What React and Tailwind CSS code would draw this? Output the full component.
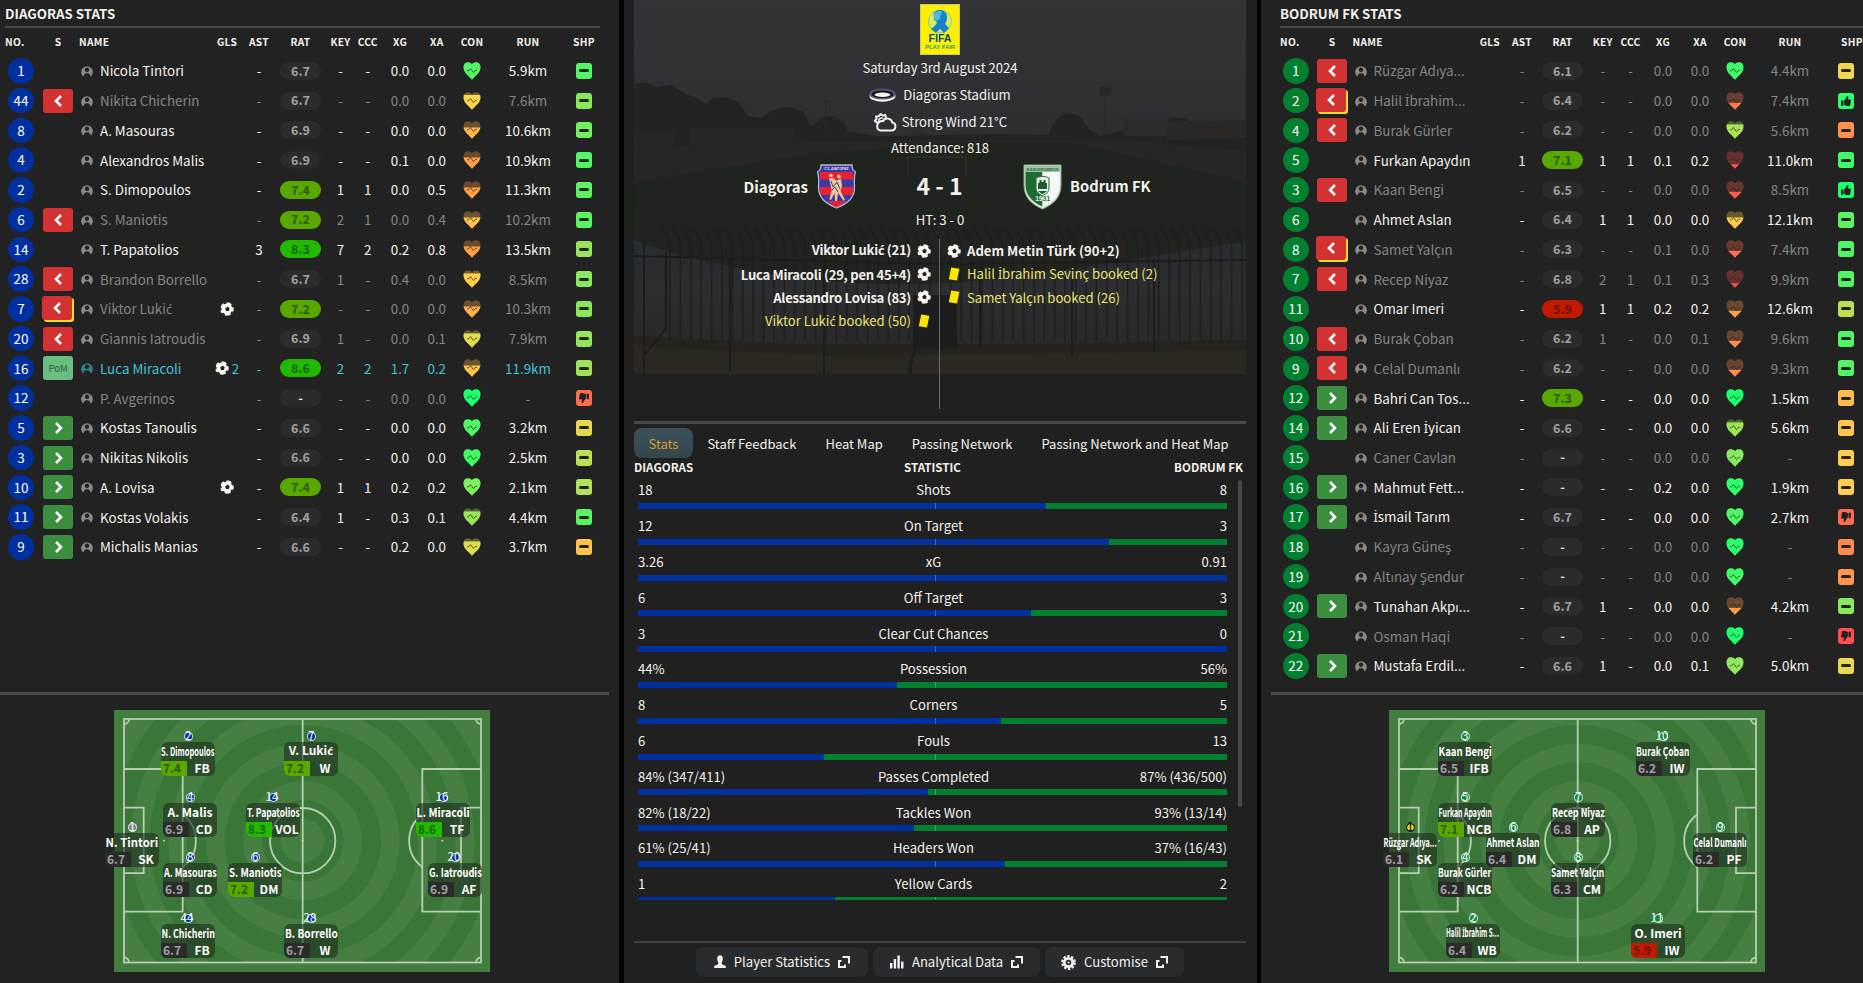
import { useLayoutEffect, useRef } from 'react';
import { FaThumbsUp, FaThumbsDown } from 'react-icons/fa';

const BLUE = '#0030a0';
const GREEN = '#03802f';

// no, sub status, name, goals, ast, rating, key, ccc, xg, xa, heart colour, heart level, run, shape colour, shape icon, tone
const HOME_PLAYERS = [
  [1, '', 'Nicola Tintori', 0, '-', '6.7', '-', '-', '0.0', '0.0', '#52f562', 1, '5.9km', '#52f566', '-', 'lit'],
  [44, 'off', 'Nikita Chicherin', 0, '-', '6.7', '-', '-', '0.0', '0.0', '#f8d84a', 0.83, '7.6km', '#8be85c', '-', 'dim'],
  [8, '', 'A. Masouras', 0, '-', '6.9', '-', '-', '0.0', '0.0', '#ffb84a', 0.62, '10.6km', '#72ee60', '-', 'lit'],
  [4, '', 'Alexandros Malis', 0, '-', '6.9', '-', '-', '0.1', '0.0', '#ff9f45', 0.62, '10.9km', '#52f566', '-', 'lit'],
  [2, '', 'S. Dimopoulos', 0, '-', '7.4', '1', '1', '0.0', '0.5', '#ff9f45', 0.62, '11.3km', '#5cf363', '-', 'lit'],
  [6, 'off', 'S. Maniotis', 0, '-', '7.2', '2', '1', '0.0', '0.4', '#ffc24a', 0.62, '10.2km', '#5cf363', '-', 'dim'],
  [14, '', 'T. Papatolios', 0, '3', '8.3', '7', '2', '0.2', '0.8', '#ff9f45', 0.62, '13.5km', '#9be35a', '-', 'lit'],
  [28, 'off', 'Brandon Borrello', 0, '-', '6.7', '1', '-', '0.4', '0.0', '#ffcf4a', 0.8, '8.5km', '#8be85c', '-', 'dim'],
  [7, 'off-booked', 'Viktor Lukić', 1, '-', '7.2', '-', '-', '0.0', '0.0', '#ffb24a', 0.62, '10.3km', '#8be85c', '-', 'dim'],
  [20, 'off', 'Giannis Iatroudis', 0, '-', '6.9', '1', '-', '0.0', '0.1', '#e2dc4f', 0.8, '7.9km', '#94e65b', '-', 'dim'],
  [16, 'pom', 'Luca Miracoli', 2, '-', '8.6', '2', '2', '1.7', '0.2', '#ffc24a', 0.62, '11.9km', '#a0e15a', '-', 'pom'],
  [12, '', 'P. Avgerinos', 0, '-', '-', '-', '-', '0.0', '0.0', '#1dff6b', 1, '-', '#ff6b4f', 'down', 'dim'],
  [5, 'on', 'Kostas Tanoulis', 0, '-', '6.6', '-', '-', '0.0', '0.0', '#4ff562', 1, '3.2km', '#e5d852', '-', 'lit'],
  [3, 'on', 'Nikitas Nikolis', 0, '-', '6.6', '-', '-', '0.0', '0.0', '#40fa64', 1, '2.5km', '#bddf57', '-', 'lit'],
  [10, 'on', 'A. Lovisa', 1, '-', '7.4', '1', '1', '0.2', '0.2', '#7def5c', 1, '2.1km', '#b0e158', '-', 'lit'],
  [11, 'on', 'Kostas Volakis', 0, '-', '6.4', '1', '-', '0.3', '0.1', '#9be656', 0.8, '4.4km', '#5cf363', '-', 'lit'],
  [9, 'on', 'Michalis Manias', 0, '-', '6.6', '-', '-', '0.2', '0.0', '#dedc50', 0.8, '3.7km', '#ffc24f', '-', 'lit'],
];

const AWAY_PLAYERS = [
  [1, 'off', 'Rüzgar Adıya...', 0, '-', '6.1', '-', '-', '0.0', '0.0', '#40fa64', 1, '4.4km', '#f3d54f', '-', 'dim'],
  [2, 'off-booked', 'Halil İbrahim...', 0, '-', '6.4', '-', '-', '0.0', '0.0', '#ff7a4a', 0.36, '7.4km', '#2cff6c', 'up', 'dim'],
  [4, 'off', 'Burak Gürler', 0, '-', '6.2', '-', '-', '0.0', '0.0', '#a5e556', 0.8, '5.6km', '#ff914d', '-', 'dim'],
  [5, '', 'Furkan Apaydın', 0, '1', '7.1', '1', '1', '0.1', '0.2', '#ff4f4a', 0.22, '11.0km', '#40fa69', '-', 'lit'],
  [3, 'off', 'Kaan Bengi', 0, '-', '6.5', '-', '-', '0.0', '0.0', '#ff5e4a', 0.36, '8.5km', '#1dff6b', 'up', 'dim'],
  [6, '', 'Ahmet Aslan', 0, '-', '6.4', '1', '1', '0.0', '0.0', '#ffcc4a', 0.62, '12.1km', '#5cf363', '-', 'lit'],
  [8, 'off-booked', 'Samet Yalçın', 0, '-', '6.3', '-', '-', '0.1', '0.0', '#ff6f4a', 0.36, '7.4km', '#52f566', '-', 'dim'],
  [7, 'off', 'Recep Niyaz', 0, '-', '6.8', '2', '1', '0.1', '0.3', '#ff4f4a', 0.22, '9.9km', '#52f566', '-', 'dim'],
  [11, '', 'Omar Imeri', 0, '-', '5.9', '1', '1', '0.2', '0.2', '#ff9f45', 0.36, '12.6km', '#bddf57', '-', 'lit'],
  [10, 'off', 'Burak Çoban', 0, '-', '6.2', '1', '-', '0.0', '0.1', '#ff8c4a', 0.36, '9.6km', '#52f566', '-', 'dim'],
  [9, 'off', 'Celal Dumanlı', 0, '-', '6.2', '-', '-', '0.0', '0.0', '#ff8c4a', 0.36, '9.3km', '#52f566', '-', 'dim'],
  [12, 'on', 'Bahri Can Tos...', 0, '-', '7.3', '-', '-', '0.0', '0.0', '#1dff6b', 1, '1.5km', '#ffbb4f', '-', 'lit'],
  [14, 'on', 'Ali Eren İyican', 0, '-', '6.6', '-', '-', '0.0', '0.0', '#9be656', 0.8, '5.6km', '#ffc64f', '-', 'lit'],
  [15, '', 'Caner Cavlan', 0, '-', '-', '-', '-', '0.0', '0.0', '#86eb5c', 1, '-', '#ffce4f', '-', 'dim'],
  [16, 'on', 'Mahmut Fett...', 0, '-', '-', '-', '-', '0.2', '0.0', '#2cff6c', 1, '1.9km', '#ffce4f', '-', 'lit'],
  [17, 'on', 'İsmail Tarım', 0, '-', '6.7', '-', '-', '0.0', '0.0', '#4ff562', 1, '2.7km', '#ff6b4f', 'down', 'lit'],
  [18, '', 'Kayra Güneş', 0, '-', '-', '-', '-', '0.0', '0.0', '#2cff6c', 1, '-', '#ff8a4d', '-', 'dim'],
  [19, '', 'Altınay Şendur', 0, '-', '-', '-', '-', '0.0', '0.0', '#40fa64', 1, '-', '#ff964d', '-', 'dim'],
  [20, 'on', 'Tunahan Akpı...', 0, '-', '6.7', '1', '-', '0.0', '0.0', '#ff9f45', 0.36, '4.2km', '#86eb5c', '-', 'lit'],
  [21, '', 'Osman Haqi', 0, '-', '-', '-', '-', '0.0', '0.0', '#1dff6b', 1, '-', '#ff4f4f', 'down', 'dim'],
  [22, 'on', 'Mustafa Erdil...', 0, '-', '6.6', '1', '-', '0.0', '0.1', '#8fe95a', 1, '5.0km', '#ead852', '-', 'lit'],
];

// name, rating, role, shirt, x, y
const HOME_LINEUP = [
  ['N. Tintori', '6.7', 'SK', '1', -9, 123],
  ['S. Dimopoulos', '7.4', 'FB', '2', 47, 32],
  ['A. Malis', '6.9', 'CD', '4', 49, 93],
  ['A. Masouras', '6.9', 'CD', '8', 49, 153],
  ['N. Chicherin', '6.7', 'FB', '44', 47, 214],
  ['V. Lukić', '7.2', 'W', '7', 170, 32],
  ['T. Papatolios', '8.3', 'VOL', '14', 132, 93],
  ['S. Maniotis', '7.2', 'DM', '6', 114, 153],
  ['B. Borrello', '6.7', 'W', '28', 170, 214],
  ['L. Miracoli', '8.6', 'TF', '16', 302, 93],
  ['G. Iatroudis', '6.9', 'AF', '20', 314, 153],
];

const AWAY_LINEUP = [
  ['Rüzgar Adıya...', '6.1', 'SK', '1', -6, 123],
  ['Kaan Bengi', '6.5', 'IFB', '3', 49, 32],
  ['Furkan Apaydın', '7.1', 'NCB', '5', 49, 93],
  ['Burak Gürler', '6.2', 'NCB', '4', 49, 153],
  ['Halil İbrahim S...', '6.4', 'WB', '2', 57, 214],
  ['Ahmet Aslan', '6.4', 'DM', '6', 97, 123],
  ['Recep Niyaz', '6.8', 'AP', '7', 162, 93],
  ['Samet Yalçın', '6.3', 'CM', '8', 162, 153],
  ['Burak Çoban', '6.2', 'IW', '10', 247, 32],
  ['Celal Dumanlı', '6.2', 'PF', '9', 304, 123],
  ['O. Imeri', '5.9', 'IW', '11', 242, 214],
];

const MATCH_STATS = [
  ['18', 'Shots', '8', 69.3],
  ['12', 'On Target', '3', 80],
  ['3.26', 'xG', '0.91', 100],
  ['6', 'Off Target', '3', 66.7],
  ['3', 'Clear Cut Chances', '0', 100],
  ['44%', 'Possession', '56%', 44],
  ['8', 'Corners', '5', 61.6],
  ['6', 'Fouls', '13', 31.6],
  ['84% (347/411)', 'Passes Completed', '87% (436/500)', 49.3],
  ['82% (18/22)', 'Tackles Won', '93% (13/14)', 46.9],
  ['61% (25/41)', 'Headers Won', '37% (16/43)', 62.3],
  ['1', 'Yellow Cards', '2', 33.4],
];

const TABS = ['Stats', 'Staff Feedback', 'Heat Map', 'Passing Network', 'Passing Network and Heat Map'];

const HOME_COLS = 'grid-cols-[42px_32px_135px_36px_28px_55px_25px_29.5px_35px_38.5px_32px_80px_32px]';
const AWAY_COLS = 'grid-cols-[41.5px_31px_126px_32.5px_32px_49px_31.5px_24px_41px_33px_37px_73px_39px]';

const TONES = {
  lit: 'text-[#f4f1ec]',
  dim: 'text-[#858585]',
  pom: 'text-[#42c0d6]',
};

function ratingClass(rating) {
  const value = parseFloat(rating);
  if (Number.isNaN(value)) return 'bg-[#2b2b2b] text-[#e5e5e5]';
  if (value >= 8) return 'bg-[#23b900] text-[#15650a]';
  if (value >= 7) return 'bg-[#58a800] text-[#2f5a07]';
  if (value < 6) return 'bg-[#c21a00] text-[#6d1206]';
  return 'bg-[#2b2b2b] text-[#a0a0a0]';
}

export default function App() {
  return (
    <div className="flex h-[983px] w-[1863px] overflow-hidden bg-black font-['Noto_Sans_CJK_SC','Noto_Sans',sans-serif] text-[13.4px] leading-none text-[#f4f1ec]">
      <section className="flex w-[619px] flex-none flex-col bg-[#222222]">
        <TeamTable title="DIAGORAS STATS" cols={HOME_COLS} players={HOME_PLAYERS} colour={BLUE} home />
        <div className="h-[3px] w-[609px] flex-none bg-[#484848]" />
        <div className="pt-[15px] pl-[114px]">
          <Pitch lineup={HOME_LINEUP} colour={BLUE} keeper="#8a8090" />
        </div>
      </section>

      <MatchPanel />

      <section className="ml-1 flex w-[602px] flex-none flex-col overflow-hidden bg-[#222222]">
        <div className="pl-[14px]">
          <TeamTable title="BODRUM FK STATS" cols={AWAY_COLS} players={AWAY_PLAYERS} colour={GREEN} />
        </div>
        <div className="ml-[10px] h-[3px] flex-none bg-[#484848]" />
        <div className="pt-[15px] pl-[128px]">
          <Pitch lineup={AWAY_LINEUP} colour="#0a8a45" keeper="#e6d800" darkKeeper />
        </div>
      </section>
    </div>
  );
}

function Name({ children }) {
  return children.split(/([ćİ])/).map((part, i) =>
    part === 'ć' || part === 'İ' ? (
      <span key={i} className="font-['Noto_Sans',sans-serif] text-[0.95em]">
        {part}
      </span>
    ) : (
      part
    )
  );
}

function TeamTable({ title, cols, players, colour, home }) {
  return (
    <div className="flex h-[692px] flex-none flex-col">
      <h2 className="flex h-[25.5px] items-center pt-px pl-[5px] text-[13.3px] font-bold">{title}</h2>
      <div className={`ml-[5px] h-[2px] flex-none bg-[#484848] ${home ? 'w-[595px]' : 'w-[600px]'}`} />
      <div className={`grid h-[28.6px] flex-none items-center pt-px text-center text-[10.2px] font-bold tracking-[0.3px] ${cols}`}>
        <span className="pl-[5px] text-left">NO.</span>
        <span>S</span>
        <span className="pl-[5px] text-left">NAME</span>
        <span>GLS</span>
        <span>AST</span>
        <span>RAT</span>
        <span>KEY</span>
        <span>CCC</span>
        <span>XG</span>
        <span>XA</span>
        <span>CON</span>
        <span>RUN</span>
        <span className={home ? '' : 'pl-3'}>SHP</span>
      </div>
      {players.map((player) => (
        <PlayerRow key={player[0]} player={player} cols={cols} colour={colour} />
      ))}
    </div>
  );
}

function PlayerRow({ player, cols, colour }) {
  const [no, sub, name, goals, ast, rating, key, ccc, xg, xa, heart, level, run, shape, shapeIcon, tone] = player;
  return (
    <div className={`grid h-[29.75px] flex-none items-center justify-items-center ${cols} ${TONES[tone]}`}>
      <span
        className="flex h-[25.5px] w-[25.5px] items-center justify-center rounded-full text-[13.5px] text-white"
        style={{ backgroundColor: colour }}
      >
        {no}
      </span>
      <SubBadge status={sub} />
      <span className="flex w-full items-center gap-[7px] pl-[7px] whitespace-nowrap">
        <PersonIcon className={tone === 'pom' ? 'text-[#2f7f8c]' : 'text-[#8b8886]'} />
        <span>
          <Name>{name}</Name>
        </span>
      </span>
      <span className="flex items-center gap-[3px]">
        {goals > 0 && <BallIcon />}
        {goals > 1 && <span>{goals}</span>}
      </span>
      <span>{ast}</span>
      <span className={`flex h-[18px] w-[41px] items-center justify-center rounded-full text-[12.5px] font-bold ${ratingClass(rating)}`}>
        {rating}
      </span>
      <span>{key}</span>
      <span>{ccc}</span>
      <span>{xg}</span>
      <span>{xa}</span>
      <HeartIcon colour={heart} level={level} id={`${colour.slice(1)}-${no}`} />
      <span>{run}</span>
      <span className="flex h-4 w-4 items-center justify-center rounded-[3px] text-[#222222]" style={{ backgroundColor: shape }}>
        {shapeIcon === 'up' && <FaThumbsUp size={10} />}
        {shapeIcon === 'down' && <FaThumbsDown size={10} className="-scale-x-100" />}
        {shapeIcon === '-' && <span className="h-[3px] w-[10px] rounded-full bg-[#222222]" />}
      </span>
    </div>
  );
}

function SubBadge({ status }) {
  if (!status) return <span />;
  if (status === 'pom') {
    return (
      <span className="flex h-6 w-[30px] items-center justify-center rounded-[3px] bg-[#69be80] text-[9.5px] text-[#2c6440]">
        PoM
      </span>
    );
  }
  if (status === 'on') {
    return (
      <span className="flex h-6 w-[30px] items-center justify-center rounded-[3px] bg-[#3b8f3e]">
        <Chevron d="M3 1l5 5-5 5" />
      </span>
    );
  }
  const booked = status === 'off-booked' ? '-translate-x-px -translate-y-px shadow-[2px_2px_0_#f2e01f]' : '';
  return (
    <span className={`flex h-6 w-[30px] items-center justify-center rounded-[3px] bg-[#d43132] ${booked}`}>
      <Chevron d="M8 1L3 6l5 5" />
    </span>
  );
}

function Chevron({ d }) {
  return (
    <svg width="11" height="12" viewBox="0 0 11 12" fill="none" stroke="#fff" strokeWidth="2.6">
      <path d={d} />
    </svg>
  );
}

function PersonIcon({ className }) {
  return (
    <svg width="12" height="12" viewBox="0 0 12 12" className={`flex-none ${className}`}>
      <path d="M1.8 11.2A5.9 5.9 0 1 1 10.2 11.2z" fill="currentColor" />
      <circle cx="6" cy="4.7" r="2.2" fill="#222" />
      <path d="M2.6 12C2.6 9.2 4 8.2 6 8.2s3.4 1 3.4 3.8z" fill="#222" />
    </svg>
  );
}

function BallIcon() {
  return (
    <svg width="14" height="14" viewBox="0 0 14 14" className="flex-none">
      <circle cx="7" cy="7" r="6.8" fill="#fbf6ee" />
      <path d="M7.8 4.6l1.9 1.8-.9 2.6H6.1l-.9-2.6z" fill="#222" />
      <path d="M4.2 0l3 .2-1.4 1.8-2.2.2zM12 1.6l2 3.2-1.7.6-1.2-1.8zM13.6 9.6l-2.4 3.4-.7-2.2 1-1.4zM4.4 14l-3-2.2 1.8-1 1.8 1.200zM0 8.600l.2-4 1.400 1.600-.1 2z" fill="#222" />
    </svg>
  );
}

function HeartIcon({ colour, level, id }) {
  const top = 17 * (1 - level);
  return (
    <svg width="18" height="18" viewBox="0 0 18 18">
      <clipPath id={`heart-${id}`}>
        <path d="M9 17.800C6.500 14 .5 11.500 .5 5.200 .5 2 2.400.3 4.900.3 6.900.3 8.200 1.100 9 2.200 9.800 1.100 11.100.3 13.100.3c2.500 0 4.400 1.700 4.400 4.900 0 6.300-6 8.800-8.500 12.600z" />
      </clipPath>
      <g clipPath={`url(#heart-${id})`}>
        <rect width="18" height="18" fill={colour} opacity="0.32" />
        <rect y={top} width="18" height={18 - top} fill={colour} />
        <path d="M4 8.800h1.500L7.500 6.600l3 4L12.500 8.400H14" fill="none" stroke="#222" strokeOpacity="0.7" strokeWidth="1" />
      </g>
    </svg>
  );
}

function FitText({ children, max }) {
  const ref = useRef(null);

  // squeeze long names into the card
  useLayoutEffect(() => {
    const width = ref.current.offsetWidth;
    if (width > max) ref.current.style.transform = `scaleX(${max / width})`;
  }, [children, max]);

  return (
    <span ref={ref} className="flex-none whitespace-nowrap">
      <Name>{children}</Name>
    </span>
  );
}

function Pitch({ lineup, colour, keeper, darkKeeper }) {
  const rings = [190.5, 171.8, 153, 134.3, 115.6, 96.9, 78.2, 59.5, 40.8, 22];
  return (
    <div className="relative h-[262px] w-[376px]">
      <svg width="376" height="262" viewBox="0 0 376 262" className="block">
        <rect width="376" height="262" fill="#427f3e" />
        <svg x="9" y="8" width="359" height="245" viewBox="9 8 359 245">
          <rect width="376" height="262" fill="#457f42" />
          {rings.map((r, i) => (
            <circle key={r} cx="188.7" cy="130.7" r={r} fill={i % 2 === 0 ? '#3a7638' : '#457f42'} />
          ))}
        </svg>
        <g fill="none" stroke="#b7d0b3" strokeWidth="1.8">
          <rect x="10" y="9" width="357" height="243.5" />
          <path d="M188.7 9v243.5" />
          <circle cx="188.7" cy="130.7" r="32.7" />
          <path d="M10 59h58.7v142.6H10M10 97.7h19.7v65.4H10" />
          <path d="M367 59h-58.7v142.6H367M367 97.7h-20v65.4h20" />
          <path d="M68.7 104.5a32.7 32.7 0 0 1 0 52.4M308.3 104.5a32.7 32.7 0 0 0 0 52.4" />
          <path d="M15 9a5 5 0 0 1-5 5M362 9a5 5 0 0 0 5 5M15 252.5a5 5 0 0 0-5-5M362 252.5a5 5 0 0 1 5-5" />
        </g>
        <g fill="#b7d0b3">
          <circle cx="50" cy="130.7" r="1" />
          <circle cx="188.7" cy="130.7" r="1.2" />
          <circle cx="328.3" cy="130.7" r="1" />
        </g>
      </svg>
      {lineup.map(([name, rating, role, shirt, x, y], i) => (
        <div key={name} className="absolute h-[34px] w-[54px]" style={{ left: x, top: y }}>
          <div className="absolute -top-[10px] left-0 flex h-2 w-full items-center justify-center">
            <span
              className={`h-[9px] w-[9px] rounded-full border ${i === 0 && darkKeeper ? 'border-black' : 'border-white/80'}`}
              style={{ backgroundColor: i === 0 ? keeper : colour }}
            />
          </div>
          <span
            className={`absolute -top-[12px] text-[11.5px] leading-[10px] ${shirt.length > 1 ? 'left-[19.5px]' : 'left-[24px]'} ${i === 0 && darkKeeper ? 'text-black' : 'text-white'}`}
          >
            {shirt}
          </span>
          <div className="h-full rounded-[6px] bg-[#1f2b20]/60" />
          <div className="absolute inset-0 flex flex-col">
            <div className="flex h-[19px] items-center justify-center pb-[2px] text-[12px] font-bold text-white">
              <FitText max={53}>{name}</FitText>
            </div>
            <div className="flex h-[15px] items-center text-[12px] font-bold">
              <span className={`flex h-full w-[26px] items-center justify-center rounded-bl-[6px] pr-1 pb-[2px] ${ratingClass(rating)}`}>
                {rating}
              </span>
              <span className="flex-1 pb-[2px] pl-[2px] text-center text-white">{role}</span>
            </div>
          </div>
        </div>
      ))}
    </div>
  );
}

function MatchPanel() {
  return (
    <section className="ml-[5px] flex w-[633px] flex-none flex-col bg-[#202020] pr-[11px] pl-[10px] text-[13.1px]">
      <MatchHeader />
      <div className="h-[3px] flex-none bg-[#484848]" />
      <nav className="mt-1 flex h-[30px] flex-none whitespace-nowrap text-[13px]">
        {TABS.map((tab, i) => (
          <button
            key={tab}
            className={`flex items-center rounded-lg px-[14.5px] ${i === 0 ? 'bg-linear-to-b from-[#3d4f58] to-[#34464e] text-[#d0a228]' : ''}`}
          >
            {tab}
          </button>
        ))}
      </nav>
      <div className="grid h-5 flex-none grid-cols-3 items-center pr-[3px] text-[11.6px] font-bold">
        <span>DIAGORAS</span>
        <span className="pr-3 text-center">STATISTIC</span>
        <span className="text-right">BODRUM FK</span>
      </div>
      <div className="flex h-[422px] flex-none overflow-hidden">
        <div className="ml-1 w-[589px] flex-none">
          {MATCH_STATS.map((stat) => (
            <StatRow key={stat[1]} stat={stat} />
          ))}
        </div>
        <div className="mt-[2px] ml-[11px] h-[327px] w-1 rounded-full bg-[#484848]" />
      </div>
      <div className="mt-[41px] h-[2px] flex-none bg-[#414141]" />
      <footer className="mt-1 flex h-[30px] justify-center gap-[5px]">
        <FooterButton className="w-[172px]" label="Player Statistics">
          <svg width="12" height="14" viewBox="0 0 12 14" fill="#f4f1ec">
            <ellipse cx="6" cy="4" rx="2.8" ry="3.7" />
            <path d="M4.5 7h3l.5 2.500 3 1a1.500 1.500 0 0 1 .8 1.400V13H.2v-1.100A1.500 1.500 0 0 1 1 10.500l3-1z" />
          </svg>
        </FooterButton>
        <FooterButton className="w-[167px]" label="Analytical Data">
          <svg width="14" height="14" viewBox="0 0 14 14" fill="#f4f1ec">
            <path d="M0 8h2.400v5.500H0zM3.700 4h2.400v9.500H3.700zM7.400.5h2.400v13H7.400zM11.100 6.500h2.400v7h-2.400z" />
          </svg>
        </FooterButton>
        <FooterButton className="w-[139px]" label="Customise">
          <svg width="15" height="15" viewBox="0 0 14 14">
            <circle cx="7" cy="7" r="5.9" fill="none" stroke="#f4f1ec" strokeWidth="2" strokeDasharray="2.2 1.5" />
            <circle cx="7" cy="7" r="5.2" fill="#f4f1ec" />
            <circle cx="7" cy="7" r="2.6" fill="#282c2e" />
            <circle cx="7" cy="7" r="1" fill="#f4f1ec" />
          </svg>
        </FooterButton>
      </footer>
    </section>
  );
}

function StatRow({ stat }) {
  const [home, label, away, share] = stat;
  return (
    <div className="h-[35.8px]">
      <div className="grid h-[25px] grid-cols-3 items-center pb-px">
        <span>{home}</span>
        <span className="pl-[2px] text-center whitespace-nowrap">{label}</span>
        <span className="text-right">{away}</span>
      </div>
      <div className="relative flex h-[6px] bg-[#03802f]">
        <div className="bg-[#0030a0]" style={{ width: `${share}%` }} />
        <div className="absolute left-[297px] h-full w-px bg-white/25" />
      </div>
    </div>
  );
}

function FooterButton({ className, label, children }) {
  return (
    <button className={`flex items-center justify-center gap-2 rounded-lg bg-[#282c2e] whitespace-nowrap ${className}`}>
      {children}
      {label}
      <svg width="12" height="12" viewBox="0 0 12 12" fill="none" stroke="#f4f1ec" strokeWidth="2">
        <path d="M4.5 1H11v6.500M3.500 5H1v6h6V8.500" />
      </svg>
    </button>
  );
}

function MatchHeader() {
  return (
    <div className="relative h-[421px] flex-none">
      <StadiumPhoto />
      <div className="relative flex flex-col items-center pt-1">
        <FairPlayLogo />
        <div className="flex h-[26px] items-center">Saturday 3rd August 2024</div>
        <div className="flex h-[27px] items-center gap-[7px]">
          <svg width="27" height="14" viewBox="0 0 27 14">
            <ellipse cx="13.5" cy="8" rx="13" ry="5.8" fill="#fbf6ee" />
            <ellipse cx="13.5" cy="6" rx="13" ry="5.6" fill="#58587c" />
            <ellipse cx="13.5" cy="6.3" rx="11" ry="3.8" fill="#15151c" />
            <ellipse cx="13.5" cy="6.8" rx="8" ry="2.2" fill="#fbf6ee" />
          </svg>
          Diagoras Stadium
        </div>
        <div className="flex h-[28px] items-center gap-[5px]">
          <svg width="24" height="20" viewBox="0 0 24 20" fill="none" stroke="#f4f1ec" strokeWidth="2" strokeLinecap="round" strokeLinejoin="round">
            <path d="M7.500 18.500h11a4 4 0 0 0 .8-7.900 5 5 0 0 0-9.300-1.400 4.800 4.800 0 0 0-5.800 4.600 4.400 4.400 0 0 0 3.300 4.700z" />
            <path d="M4 10.500L1.800 9l1.700-2-.4-2.600 2.700-.1L7.500 2l2.200 1.600L12.300 3l.5 2.500" />
            <path d="M5.500 9.300c0-2.200 2-3.800 4.400-3" strokeWidth="1.4" />
          </svg>
          Strong Wind 21°C
        </div>
        <div className="flex h-6 items-center">Attendance: 818</div>
        <div className="grid h-[53px] w-full grid-cols-[222px_167px_223px] items-center font-bold">
          <div className="flex items-center justify-end gap-[9px]">
            <span className="text-[15px]">Diagoras</span>
            <DiagorasCrest />
          </div>
          <div className="pb-[2px] text-center text-[23px]">4 - 1</div>
          <div className="flex items-center gap-2">
            <BodrumCrest />
            <span className="text-[14.7px]">Bodrum FK</span>
          </div>
        </div>
        <div className="flex h-[15px] items-center pb-[2px]">HT: 3 - 0</div>
      </div>
      <div className="relative mt-[11px] flex h-[170px]">
        <div className="flex w-[305px] flex-col items-end pr-[8px]">
          <MatchEvent type="goal" right>Viktor Lukić (21)</MatchEvent>
          <MatchEvent type="goal" right>Luca Miracoli (29, pen 45+4)</MatchEvent>
          <MatchEvent type="goal" right>Alessandro Lovisa (83)</MatchEvent>
          <MatchEvent type="card" right>Viktor Lukić booked (50)</MatchEvent>
        </div>
        <div className="w-px bg-[#6a6a6a]" />
        <div className="pl-[7px]">
          <MatchEvent type="goal">Adem Metin Türk (90+2)</MatchEvent>
          <MatchEvent type="card">Halil İbrahim Sevinç booked (2)</MatchEvent>
          <MatchEvent type="card">Samet Yalçın booked (26)</MatchEvent>
        </div>
      </div>
    </div>
  );
}

function MatchEvent({ type, right, children }) {
  const tone = type === 'goal' ? 'font-bold' : 'text-[#ebe373]';
  const side = right ? 'flex-row-reverse' : '';
  const tracking = right && type === 'goal' ? 'tracking-[-0.28px]' : '';
  return (
    <div className={`flex h-[23.4px] items-center gap-[6px] whitespace-nowrap ${side} ${tone} ${tracking}`}>
      {type === 'goal' ? (
        <BallIcon />
      ) : (
        <svg width="14" height="14" viewBox="0 0 14 14" className="flex-none">
          <path d="M4.200.6l8.200 1.200-2.400 11.600-8.200-1.200z" fill="#ffe600" />
        </svg>
      )}
      <span>
        <Name>{children}</Name>
      </span>
    </div>
  );
}

function FairPlayLogo() {
  return (
    <svg width="40" height="51" viewBox="0 0 40 51" className="block font-['Liberation_Sans',sans-serif]">
      <rect x=".5" y=".5" width="39" height="50" fill="#fdf000" stroke="#c9c77a" />
      <circle cx="20" cy="17.5" r="11.5" fill="#d8ec5c" stroke="#7ccbb5" strokeWidth="1" />
      <path d="M14 9c3-4 9-4 12 0 2 4 1 8-1 11l4 4-5 5-4-4-4 4-5-4c3-2 6-5 6-7-3-1-4-6-3-9z" fill="#1583cc" />
      <path d="M14 10c2-3 6-4 8-2-2 3-1 6-4 9-3-1-5-4-4-7z" fill="#55b7e6" />
      <text x="20" y="37.5" textAnchor="middle" fontSize="10" fontWeight="700" textLength="23" lengthAdjust="spacingAndGlyphs" fill="#0b4a7c">
        FIFA
      </text>
      <text x="20" y="45" textAnchor="middle" fontSize="5.800" fontWeight="700" textLength="30" lengthAdjust="spacingAndGlyphs" fill="#2f9c8c">
        PLAY FAIR
      </text>
    </svg>
  );
}

function DiagorasCrest() {
  const shape = 'M4 1h31c0 4 1 5 3.500 7-2 5-1 10-1 15 0 11-6 16-18 21C8 39 1.500 34 1.500 23c0-5 1-10-1-15C3 6 4 5 4 1z';
  return (
    <svg width="39" height="46" viewBox="0 0 39 46" className="block flex-none font-['Liberation_Sans',sans-serif]">
      <clipPath id="diagoras-shield">
        <path d={shape} />
      </clipPath>
      <g clipPath="url(#diagoras-shield)">
        <rect width="39" height="46" fill="#3a3ba0" />
        <rect x="3" y="8" width="33" height="7.5" fill="#e8222f" />
        <rect x="3" y="23" width="33" height="8" fill="#e8222f" />
        <path d="M10 37h19l-9 7z" fill="#e8222f" />
      </g>
      <path d={shape} fill="none" stroke="#b9b6d6" strokeWidth="1.3" />
      <g fill="#e9c8a4">
        <circle cx="14" cy="11.5" r="1.8" />
        <circle cx="22" cy="12.5" r="1.9" />
        <path d="M12 14.500l4-.5 3 2.500 5-1.500 1 7-1.500 5 4.500 9-1.500.7-5.500-8.200-1 8.500h-1.800l-.7-8-3.500 7-1.600-.7 2.400-9z" />
      </g>
      <path d="M14 17l2 6 4-5 3 7M15 26l3-3 3 5" stroke="#4b3a6a" strokeWidth="1" fill="none" />
      <text x="19.5" y="6.3" textAnchor="middle" fontSize="4" fontWeight="700" textLength="24" lengthAdjust="spacingAndGlyphs" fill="#e8e6f5">
        Γ.Σ. ΔΙΑΓΟΡΑΣ
      </text>
    </svg>
  );
}

function BodrumCrest() {
  return (
    <svg width="39" height="46" viewBox="0 0 39 46" className="block flex-none font-['Liberation_Sans',sans-serif]">
      <path d="M1 1h37v20c0 12-7 19-18.500 24C8 40 1 33 1 21z" fill="#dfe9df" stroke="#8aa88a" />
      <path d="M2.500 8H19.500v34.500C9 38 2.500 31 2.500 21z" fill="#1d6b32" />
      <path d="M19.500 8h17v13c0 10-6 17-17 21.500z" fill="#f5f8f5" />
      <rect x="2" y="2" width="35" height="6" fill="#9fc1a4" />
      <path d="M13 14c3-2 10-2 13 0v10c0 4-3 6-6.500 8-3.500-2-6.500-4-6.500-8z" fill="#e9f1e9" stroke="#1d6b32" strokeWidth="1" />
      <path d="M15 25v-6h1.500v-3h2v2h2v-2h2v3H24v6zM15 27h9l-4.500 3.500z" fill="#1d5a2c" />
      <text x="19.5" y="6.6" textAnchor="middle" fontSize="4.400" fontWeight="700" textLength="32" lengthAdjust="spacingAndGlyphs" fill="#1d6b32">
        B.B.BODRUMSPOR
      </text>
      <text x="15.8" y="37" textAnchor="middle" fontSize="6.500" fontWeight="700" fill="#eef5ee">
        19
      </text>
      <text x="23.4" y="37" textAnchor="middle" fontSize="6.500" fontWeight="700" fill="#1d6b32">
        31
      </text>
    </svg>
  );
}

function StadiumPhoto() {
  const posts = Array.from({ length: 56 }, (_, i) => 36 + i * 10.4);
  return (
    <svg width="612" height="374" viewBox="0 0 612 374" className="absolute top-0 left-0">
      <defs>
        <linearGradient id="sky" x1="0" y1="0" x2="0" y2="1">
          <stop offset="0" stopColor="#333437" />
          <stop offset="0.4" stopColor="#2d2e31" />
        </linearGradient>
        <linearGradient id="grass" x1="0" y1="0" x2="0" y2="1">
          <stop offset="0" stopColor="#1f241e" />
          <stop offset="1" stopColor="#22231f" />
        </linearGradient>
        <linearGradient id="ground" x1="0" y1="0" x2="0" y2="1">
          <stop offset="0" stopColor="#262c30" />
          <stop offset="0.5" stopColor="#2c2d2e" />
          <stop offset="1" stopColor="#292929" />
        </linearGradient>
      </defs>
      <rect width="612" height="374" fill="url(#sky)" />
      <path d="M0 84l12-2 10 5 16-2 14 9 10 4 10 6 6-6 14-1 12 5 10 14 14 2 10-8 18-3 14 5 6 14 4-1 8-8 12-1 10 6 4 10 30 4 120-2 50 1 6-14 12-8 14 3 8 12 12 8 26-6 12-4v-8h50v8l30 4 36 2v40H0z" fill="#232324" />
      <path d="M490 118h45v18h-45z" fill="#2c2c2d" />
      <path d="M0 130l40 2v40H0zM55 128h104v22H55z" fill="#282624" />
      <path d="M533 122l79-2v18l-79 2z" fill="#2b2825" />
      {/* running track */}
      <path d="M0 148l100-4 180-4 200-1 132 12v50H0z" fill="#272625" />
      {/* field */}
      <path d="M0 182l178-28 152-12h105l177 40v192H0z" fill="url(#grass)" />
      <path d="M274 177v-20h58v20" fill="none" stroke="#333633" />
      <path d="M192 130v-30M189 101h6M288 135v-40M285 100h7M471 135v-40M466 87h11v8h-11z" stroke="#27282a" fill="#27282a" />
      {/* ground behind the fence */}
      <path d="M0 240c60 22 150 42 250 44 130 2 230-24 362-42v102H0z" fill="url(#ground)" />
      <path d="M0 336l200 10 200-2 212-4v34H0z" fill="#2b2721" />
      <path d="M0 336l200 10 200-2 212-4v10l-212 4-200 2L0 346z" fill="#26231f" />
      <rect x="279" y="295" width="44" height="54" fill="#1d1d1e" />
      <g stroke="#1d1e1f" strokeWidth="1.4" fill="none">
        {posts.map((x) => (
          <path key={x} d={`M${x} 342V248q0-12-9-19`} />
        ))}
      </g>
      <path d="M0 256l300 8 312-4M10 240v134M190 258v116M96 258v114M346 262v88M438 262v94M520 258v94M10 355l22-26V252" stroke="#1b1c1d" strokeWidth="2" fill="none" />
      <path d="M282 350q-6 8-6 24" stroke="#1d1d1e" strokeWidth="3" fill="none" />
    </svg>
  );
}
